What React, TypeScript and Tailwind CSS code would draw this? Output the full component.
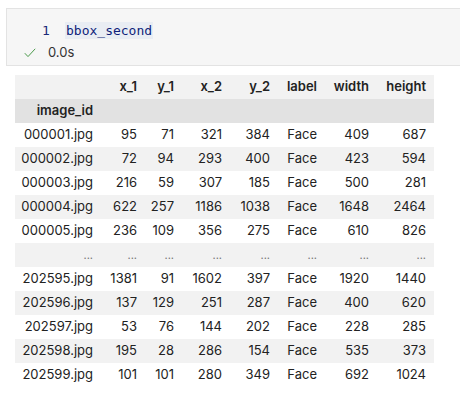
import React from "react";

const cols = ["x_1", "y_1", "x_2", "y_2", "label", "width", "height"];
const widths = ["w-[86px]", "w-[44px]", "w-[37px]", "w-[48px]", "w-[48px]", "w-[47px]", "w-[52px]", "w-[57px]"];

const rows: string[][] = [
  ["000001.jpg", "95", "71", "321", "384", "Face", "409", "687"],
  ["000002.jpg", "72", "94", "293", "400", "Face", "423", "594"],
  ["000003.jpg", "216", "59", "307", "185", "Face", "500", "281"],
  ["000004.jpg", "622", "257", "1186", "1038", "Face", "1648", "2464"],
  ["000005.jpg", "236", "109", "356", "275", "Face", "610", "826"],
  ["...", "...", "...", "...", "...", "...", "...", "..."],
  ["202595.jpg", "1381", "91", "1602", "397", "Face", "1920", "1440"],
  ["202596.jpg", "137", "129", "251", "287", "Face", "400", "620"],
  ["202597.jpg", "53", "76", "144", "202", "Face", "228", "285"],
  ["202598.jpg", "195", "28", "286", "154", "Face", "535", "373"],
  ["202599.jpg", "101", "101", "280", "349", "Face", "692", "1024"],
];

export default function App() {
  return (
    <div
      className="w-[460px] h-[398px] bg-white overflow-hidden pt-[8px]"
      style={{ fontFamily: "Inter, 'Liberation Sans', sans-serif" }}
    >
      <div className="ml-[6px] h-[58px] border-y border-l border-[#e3e3e3] bg-[#f6f6f6] flex flex-col">
        <div className="flex items-center h-[17px] mt-[13px] font-['DejaVu_Sans_Mono',monospace] text-[13px]">
          <span className="ml-[35px] w-[8px] text-[#1b2a78]">1</span>
          <span className="ml-[15px] px-[1px] bg-[#e9edf3] text-[#0f1f7a] leading-[17px]">bbox_second</span>
        </div>
        <div className="flex items-center h-[17px] mt-[5px] text-[13px] text-[#333]">
          <svg className="ml-[17px]" width="12" height="10" viewBox="0 0 12 10" fill="none">
            <path d="M0.8 5.2 L4 8.6 L11.2 0.8" stroke="#4a9a4a" strokeWidth="1" />
          </svg>
          <span className="ml-[12px]">0.0s</span>
        </div>
      </div>
      <table className="ml-[15px] mt-[9px] table-fixed border-collapse text-[13px] text-[#222]">
        <thead>
          <tr className="bg-[#f2f2f2] h-[24px]">
            <th className={`${widths[0]} p-0`}></th>
            {cols.map((c, i) => (
              <th key={c} className={`${widths[i + 1]} p-0 pr-[8px] text-right font-semibold`}>
                {c}
              </th>
            ))}
          </tr>
          <tr className="bg-[#e2e2e2] h-[24px]">
            <th className="p-0 pr-[8px] text-right font-semibold">image_id</th>
            {cols.map((c) => (
              <th key={c} className="p-0"></th>
            ))}
          </tr>
        </thead>
        <tbody>
          {rows.map((r, ri) => (
            <tr key={ri} className={`h-[24px] ${ri % 2 === 1 ? "bg-[#f2f2f2]" : "bg-white"}`}>
              {r.map((v, ci) => (
                <td
                  key={ci}
                  className={`p-0 pr-[8px] text-right whitespace-nowrap ${v === "..." ? "text-[#777] text-[11px]" : ""}`}
                >
                  {v}
                </td>
              ))}
            </tr>
          ))}
        </tbody>
      </table>
    </div>
  );
}
